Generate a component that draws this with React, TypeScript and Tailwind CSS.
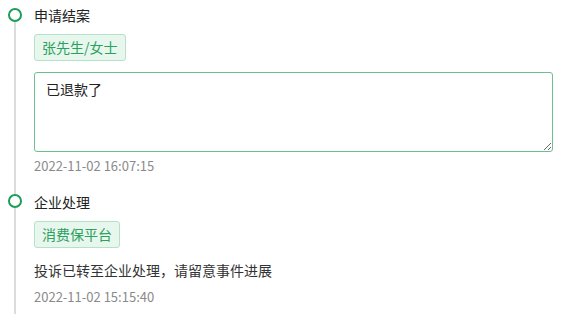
import React from "react";

const font = { fontFamily: '"Noto Sans CJK SC", "Noto Sans", sans-serif' };

type Item = {
  title: string;
  tag: string;
  content?: string;
  note?: string;
  time: string;
  last?: boolean;
};

function Dot() {
  return <div className="w-[14px] h-[14px] rounded-full border-[2.5px] border-[#1c9e58] bg-white shrink-0" />;
}

export default function App() {
  const items: Item[] = [
    { title: "申请结案", tag: "张先生/女士", content: "已退款了", time: "2022-11-02 16:07:15" },
    { title: "企业处理", tag: "消费保平台", note: "投诉已转至企业处理，请留意事件进展", time: "2022-11-02 15:15:40", last: true },
  ];

  return (
    <div className="w-[564px] h-[314px] bg-white overflow-hidden" style={font}>
      <div className="flex flex-col pt-[5px]">
        {items.map((it, i) => (
          <div key={i} className="flex">
            <div className="w-[34px] flex flex-col items-center pl-[1px] pr-[6px]">
              {i > 0 ? <div className="w-[2px] h-[2px] bg-[#dcdcdc]" /> : <div className="h-[3px]" />}
              <Dot />
              <div className="w-[2px] flex-1 bg-[#dcdcdc]" />
            </div>
            <div className={"flex flex-col w-[519px] " + (it.last ? "" : "pb-[18px]")}>
              <div className="h-[20px] leading-[20px] text-[14px] text-[#222]">{it.title}</div>
              <div className="mt-[9px] flex">
                <span className="h-[27px] leading-[25px] px-[7px] text-[14px] text-[#2aa15c] bg-[#e7f7ee] border border-[#b3e2c6] rounded-[3px]">
                  {it.tag}
                </span>
              </div>
              {it.content && (
                <textarea
                  defaultValue={it.content}
                  className="mt-[11px] w-[519px] h-[80px] border border-[#6cbf8e] rounded-[3px] px-[11px] py-[6px] text-[14px] leading-[20px] text-[#222] outline-none"
                  style={font}
                />
              )}
              {it.note && (
                <div className="mt-[13px] h-[18px] leading-[18px] text-[14px] text-[#333]">{it.note}</div>
              )}
              <div className={(it.content ? "mt-[6px]" : "mt-[10px]") + " h-[16px] leading-[16px] text-[13px] text-[#8a8a8a]"}>
                {it.time}
              </div>
              {it.last && <div className="h-[20px]" />}
            </div>
          </div>
        ))}
      </div>
    </div>
  );
}
